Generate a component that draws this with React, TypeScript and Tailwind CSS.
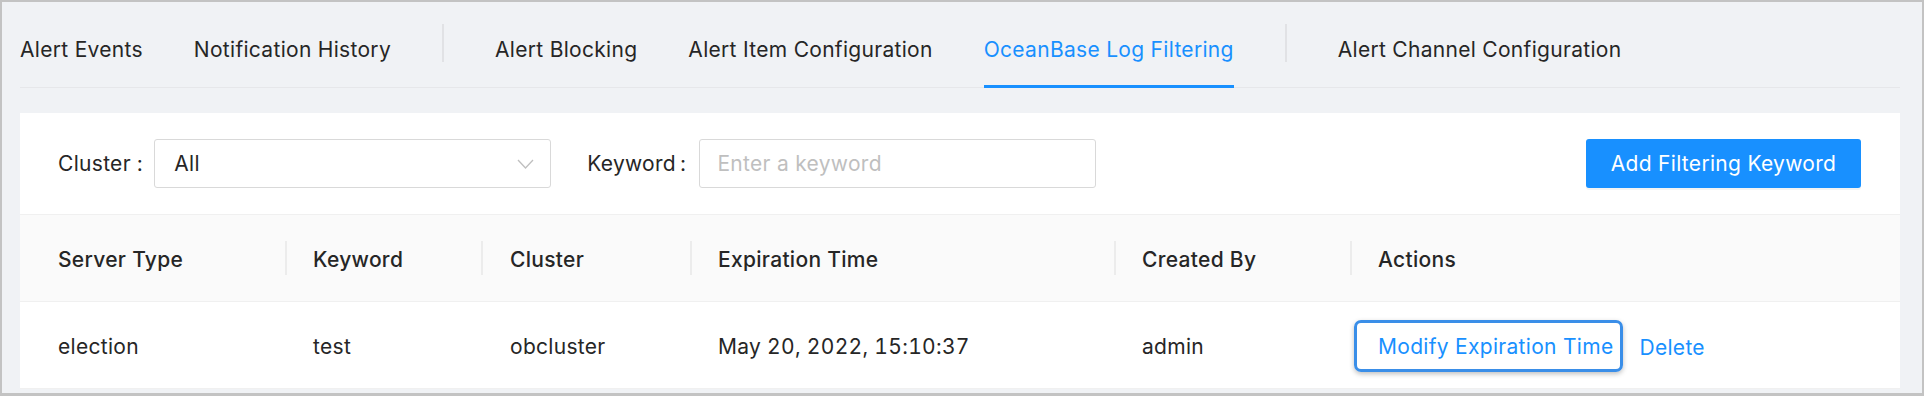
const tabs = [
  "Alert Events",
  "Notification History",
  "|",
  "Alert Blocking",
  "Alert Item Configuration",
  "OceanBase Log Filtering",
  "|",
  "Alert Channel Configuration",
];

const ACTIVE_TAB = "OceanBase Log Filtering";

const columns = [
  { title: "Server Type", width: "w-[267px]", pad: "pl-[38px]" },
  { title: "Keyword", width: "w-[196px]", pad: "pl-[26px]" },
  { title: "Cluster", width: "w-[209px]", pad: "pl-[27px]" },
  { title: "Expiration Time", width: "w-[424px]", pad: "pl-[26px]" },
  { title: "Created By", width: "w-[236px]", pad: "pl-[26px]" },
  { title: "Actions", width: "flex-1", pad: "pl-[26px]" },
];

const row = ["election", "test", "obcluster", "May 20, 2022, 15:10:37", "admin"];

export default function App() {
  return (
    <div
      className="w-[1924px] h-[396px] overflow-hidden bg-[#f0f2f5] border-[#c3c3c3] border-t-2 border-x-2 border-b-[3px] text-[#262626] text-[21px] tracking-[0.3px]"
      style={{ fontFamily: "Inter, 'Liberation Sans', sans-serif" }}
    >
      {/* Tabs */}
      <nav className="ml-[18px] w-[1880px] h-[86px] flex items-stretch gap-[51px] border-b border-[#e6e7ea]">
        {tabs.map((t, i) =>
          t === "|" ? (
            <span key={i} className="self-center mt-[-4px] w-[2px] h-[38px] bg-[#e1e2e5]" />
          ) : (
            <div
              key={t}
              className={`relative flex items-center pt-[10px] whitespace-nowrap ${
                t === ACTIVE_TAB ? "text-[#1890ff]" : ""
              }`}
            >
              {t}
              {t === ACTIVE_TAB && (
                <span className="absolute left-0 right-0 bottom-[-1px] h-[3px] bg-[#1890ff]" />
              )}
            </div>
          )
        )}
      </nav>

      {/* Card */}
      <section className="ml-[18px] mt-[25px] w-[1880px] bg-white">
        {/* Filters */}
        <div className="h-[102px] flex items-center pl-[38px] pr-[39px] border-b border-[#f0f0f0]">
          <label className="flex items-center whitespace-nowrap">
            Cluster<span className="ml-[6px] mr-[11px]">:</span>
          </label>
          <div className="w-[397px] h-[49px] flex items-center justify-between pl-[19px] pr-[16px] border border-[#d9d9d9] rounded-[3px]">
            <span>All</span>
            <svg width="17" height="10" viewBox="0 0 17 10" fill="none">
              <path d="M1 1l7.5 8L16 1" stroke="#bfbfbf" strokeWidth="1.3" />
            </svg>
          </div>
          <label className="ml-[36px] flex items-center whitespace-nowrap">
            Keyword<span className="ml-[4px] mr-[13px]">:</span>
          </label>
          <div className="w-[397px] h-[49px] flex items-center px-[17px] border border-[#d9d9d9] rounded-[3px]">
            <span className="text-[#bfbfbf]">Enter a keyword</span>
          </div>
          <button
            type="button"
            className="ml-auto w-[275px] h-[49px] rounded-[3px] bg-[#1890ff] text-white shadow-[0_2px_0_rgba(0,0,0,0.045)]"
          >
            Add Filtering Keyword
          </button>
        </div>

        {/* Table header */}
        <div className="h-[87px] flex bg-[#fafafa] border-b border-[#f0f0f0] font-medium">
          {columns.map((c, i) => (
            <div key={c.title} className={`${c.width} ${c.pad} flex items-center justify-between`}>
              <span className="pt-[4px]">{c.title}</span>
              {i < columns.length - 1 && <span className="w-[2px] h-[34px] bg-[#ececec]" />}
            </div>
          ))}
        </div>

        {/* Table row */}
        <div className="h-[87px] flex border-b border-[#f0f0f0]">
          {row.map((v, i) => (
            <div key={i} className={`${columns[i].width} ${columns[i].pad} pt-[4px] flex items-center tabular-nums`}>
              {v}
            </div>
          ))}
          <div className="flex-1 flex items-center pl-[2px] pt-[2px]">
            <a className="h-[52px] flex items-center pl-[21px] pr-[7px] pt-[2px] border-[3px] border-[#3a8ee8] rounded-[7px] text-[#1890ff] shadow-[0_2px_5px_rgba(0,0,0,0.25)] whitespace-nowrap">
              Modify Expiration Time
            </a>
            <a className="ml-[16px] pt-[4px] text-[#1890ff]">Delete</a>
          </div>
        </div>
      </section>
    </div>
  );
}
